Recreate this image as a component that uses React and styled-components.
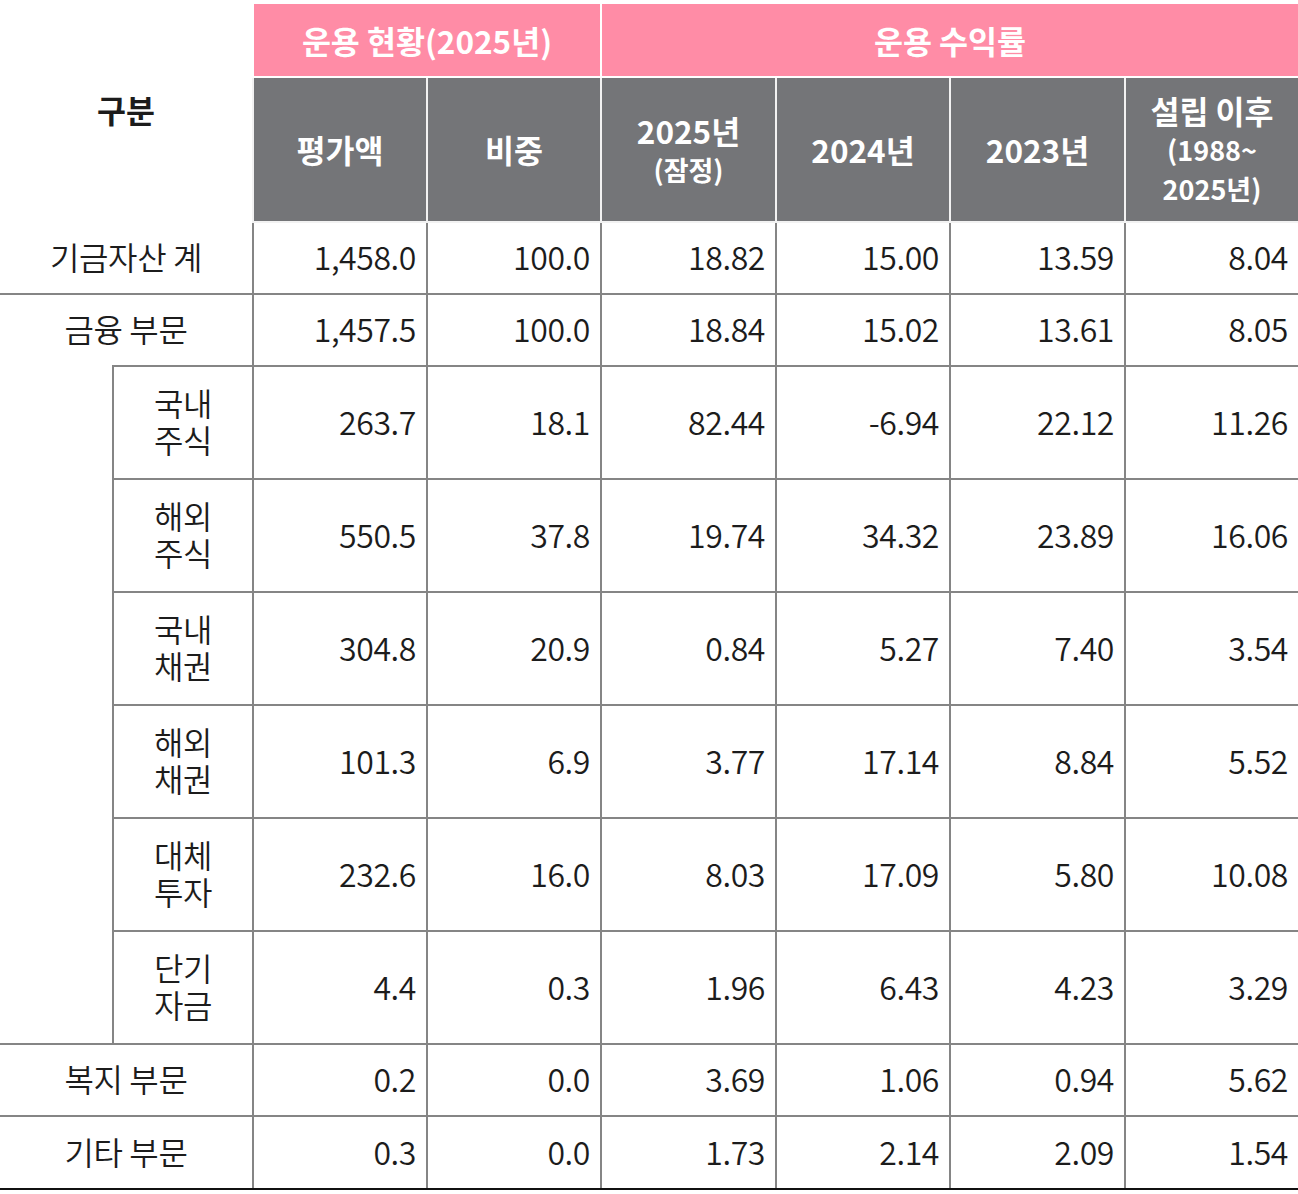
import styled, { createGlobalStyle } from "styled-components";

const GlobalStyle = createGlobalStyle`
  html, body {
    margin: 0;
    padding: 0;
    background: #fff;
  }
  body {
    font-family: "Noto Sans CJK KR", "Noto Sans", sans-serif;
    color: #1c1c1c;
  }
`;

const Wrap = styled.div`
  padding-top: 4px;
  width: 1298px;
`;

const Table = styled.table`
  width: 1298px;
  border-collapse: collapse;
  table-layout: fixed;
  font-size: 32px;
  font-weight: 350;
  letter-spacing: -0.4px;
`;

const CornerHead = styled.th`
  border: none;
  background: #fff;
  font-weight: 700;
  font-size: 31.5px;
  letter-spacing: 0;
  color: #1c1c1c;
  text-align: center;
  vertical-align: middle;
  padding: 0 0 8px;
`;

const GroupHead = styled.th`
  height: 72px;
  background: #ff8ca6;
  color: #fff;
  font-weight: 700;
  font-size: 31.5px;
  letter-spacing: 0;
  border: 2px solid #fff;
  border-top: none;
  ${(p) => p.$last && "border-right: none;"}
  padding: 0;
`;

const ColHead = styled.th`
  height: 143px;
  background: #747578;
  color: #fff;
  font-weight: 700;
  font-size: 31.5px;
  line-height: 37px;
  letter-spacing: 0;
  border: 2px solid #f2f2f2;
  ${(p) => p.$last && "border-right: none;"}
  padding: 0 4px;
`;

const Small = styled.span`
  font-size: 27px;
`;

const Label = styled.td`
  border: 2px solid #858585;
  border-left: none;
  ${(p) => p.$noTop && "border-top: none;"}
  ${(p) => p.$noBottom && "border-bottom: none;"}
  text-align: center;
  vertical-align: middle;
  padding: 0 0 4px;
`;

const SubLabel = styled.td`
  border: 2px solid #858585;
  text-align: center;
  vertical-align: middle;
  line-height: 37px;
  padding: 0 0 4px;
`;

const Spacer = styled.td`
  border: none;
  border-right: 2px solid #858585;
  border-bottom: 2px solid #858585;
  padding: 0;
`;

const Num = styled.td`
  border: 2px solid #858585;
  ${(p) => p.$last && "border-right: none;"}
  text-align: right;
  vertical-align: middle;
  padding: 0 10px 4px 0;
  white-space: nowrap;
`;

const Row = styled.tr`
  height: ${(p) => (p.$tall ? "113px" : "72px")};
`;

const BottomRow = styled.tr`
  height: 73px;
  & > td {
    border-bottom: 2px solid #111;
  }
`;

const mainRows = [
  ["기금자산 계", "1,458.0", "100.0", "18.82", "15.00", "13.59", "8.04"],
  ["금융 부문", "1,457.5", "100.0", "18.84", "15.02", "13.61", "8.05"],
];

const subRows = [
  ["국내", "주식", "263.7", "18.1", "82.44", "-6.94", "22.12", "11.26"],
  ["해외", "주식", "550.5", "37.8", "19.74", "34.32", "23.89", "16.06"],
  ["국내", "채권", "304.8", "20.9", "0.84", "5.27", "7.40", "3.54"],
  ["해외", "채권", "101.3", "6.9", "3.77", "17.14", "8.84", "5.52"],
  ["대체", "투자", "232.6", "16.0", "8.03", "17.09", "5.80", "10.08"],
  ["단기", "자금", "4.4", "0.3", "1.96", "6.43", "4.23", "3.29"],
];

const tailRows = [
  ["복지 부문", "0.2", "0.0", "3.69", "1.06", "0.94", "5.62"],
  ["기타 부문", "0.3", "0.0", "1.73", "2.14", "2.09", "1.54"],
];

function Values({ values }) {
  return values.map((v, i) => (
    <Num key={i} $last={i === values.length - 1}>
      {v}
    </Num>
  ));
}

export default function App() {
  return (
    <Wrap>
      <GlobalStyle />
      <Table>
        <colgroup>
          <col style={{ width: 113 }} />
          <col style={{ width: 140 }} />
          <col style={{ width: 174 }} />
          <col style={{ width: 174 }} />
          <col style={{ width: 175 }} />
          <col style={{ width: 174 }} />
          <col style={{ width: 175 }} />
          <col style={{ width: 173 }} />
        </colgroup>
        <thead>
          <tr>
            <CornerHead rowSpan={2} colSpan={2}>
              구분
            </CornerHead>
            <GroupHead colSpan={2}>운용 현황(2025년)</GroupHead>
            <GroupHead colSpan={4} $last>
              운용 수익률
            </GroupHead>
          </tr>
          <tr>
            <ColHead>평가액</ColHead>
            <ColHead>비중</ColHead>
            <ColHead>
              2025년
              <br />
              <Small>(잠정)</Small>
            </ColHead>
            <ColHead>2024년</ColHead>
            <ColHead>2023년</ColHead>
            <ColHead $last>
              설립 이후
              <br />
              <Small>
                (1988~
                <br />
                2025년)
              </Small>
            </ColHead>
          </tr>
        </thead>
        <tbody>
          <Row>
            <Label colSpan={2} $noTop>
              {mainRows[0][0]}
            </Label>
            <Values values={mainRows[0].slice(1)} />
          </Row>
          <Row>
            <Label colSpan={2} $noBottom>
              {mainRows[1][0]}
            </Label>
            <Values values={mainRows[1].slice(1)} />
          </Row>
          {subRows.map(([a, b, ...vals], idx) => (
            <Row key={idx} $tall>
              {idx === 0 && <Spacer rowSpan={subRows.length} />}
              <SubLabel>
                {a}
                <br />
                {b}
              </SubLabel>
              <Values values={vals} />
            </Row>
          ))}
          <Row>
            <Label colSpan={2}>{tailRows[0][0]}</Label>
            <Values values={tailRows[0].slice(1)} />
          </Row>
          <BottomRow>
            <Label colSpan={2}>{tailRows[1][0]}</Label>
            <Values values={tailRows[1].slice(1)} />
          </BottomRow>
        </tbody>
      </Table>
    </Wrap>
  );
}
